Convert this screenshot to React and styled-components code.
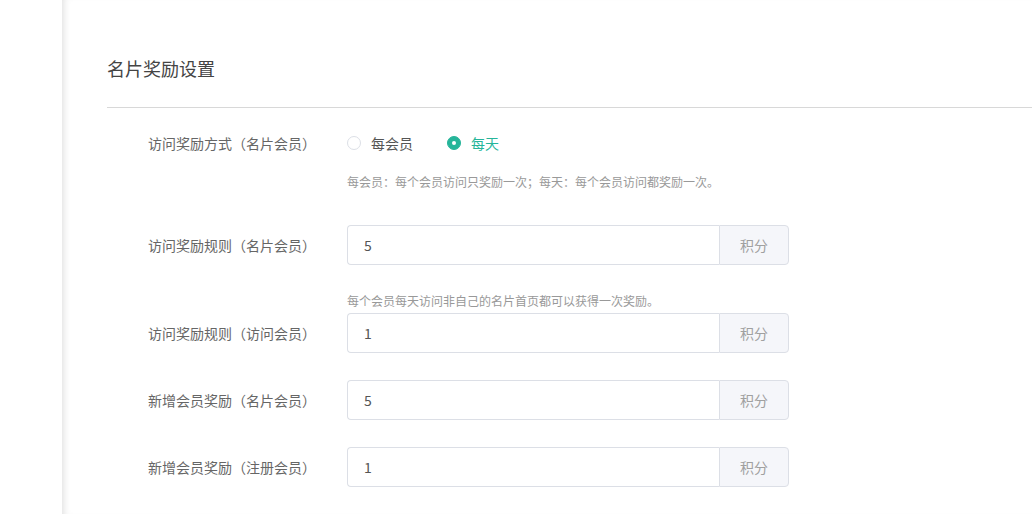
import React from 'react';
import styled, { createGlobalStyle } from 'styled-components';

const GlobalStyle = createGlobalStyle`
    html, body {
        margin: 0;
        padding: 0;
        background: #fff;
        font-family: "Noto Sans CJK SC", "Noto Sans", "Liberation Sans", sans-serif;
    }
`

const Page = styled.div`
    display: flex;
    width: 1032px;
    height: 514px;
    overflow: hidden;
`

const Sidebar = styled.div`
    width: 62px;
    flex-shrink: 0;
    background: #fff;
`

const Main = styled.div`
    flex: 1;
    padding-left: 45px;
    box-shadow: inset 7px 0 7px -5px rgba(0, 0, 0, 0.12);
`

const Header = styled.div`
    padding: 56px 0 27px;
    font-size: 18px;
    line-height: 24px;
    color: #444;
    border-bottom: 1px solid #d8d8d8;
`

const Form = styled.div`
    padding-top: 15px;
`

const Item = styled.div`
    margin-bottom: 27px;
`

const Row = styled.div`
    display: flex;
    align-items: center;
    height: 40px;
`

const Label = styled.div`
    width: 240px;
    padding-right: 31px;
    box-sizing: border-box;
    text-align: right;
    font-size: 14px;
    color: #666;
    flex-shrink: 0;
`

const Hint = styled.div`
    margin-left: 240px;
    font-size: 12px;
    line-height: 18px;
    color: #999;
    padding-top: ${p => (p.$above ? '0' : '10px')};
    padding-bottom: ${p => (p.$above ? '3px' : '7px')};
`

const RadioGroup = styled.div`
    display: flex;
    align-items: center;
    gap: 34px;
`

const RadioOption = styled.label`
    display: flex;
    align-items: center;
    gap: 10px;
    font-size: 14px;
    color: ${p => (p.$checked ? '#26b59a' : '#555')};
`

const Circle = styled.span`
    width: 14px;
    height: 14px;
    box-sizing: border-box;
    border-radius: 50%;
    border: 1px solid ${p => (p.$checked ? '#26b59a' : '#dcdfe6')};
    background: ${p => (p.$checked ? '#26b59a' : '#fff')};
    display: flex;
    align-items: center;
    justify-content: center;

    &::after {
        content: '';
        width: 4px;
        height: 4px;
        border-radius: 50%;
        background: #fff;
        display: ${p => (p.$checked ? 'block' : 'none')};
    }
`

const InputGroup = styled.div`
    display: flex;
    width: 442px;
    height: 40px;
`

const TextInput = styled.input`
    flex: 1;
    min-width: 0;
    height: 40px;
    box-sizing: border-box;
    border: 1px solid #dcdfe6;
    border-right: none;
    border-radius: 4px 0 0 4px;
    padding: 0 16px;
    font-size: 14px;
    color: #555;
    font-family: inherit;
    outline: none;
`

const Addon = styled.div`
    width: 70px;
    box-sizing: border-box;
    border: 1px solid #dcdfe6;
    border-radius: 0 4px 4px 0;
    background: #f5f6fa;
    color: #a0a0a0;
    font-size: 14px;
    display: flex;
    align-items: center;
    justify-content: center;
`

const PointsField = ({ value }) => (
    <InputGroup>
        <TextInput type='text' defaultValue={value} />
        <Addon>积分</Addon>
    </InputGroup>
)

const App = () => {
    return (
        <Page>
            <GlobalStyle />
            <Sidebar />
            <Main>
                <Header>名片奖励设置</Header>
                <Form>
                    <Item>
                        <Row>
                            <Label>访问奖励方式（名片会员）</Label>
                            <RadioGroup>
                                <RadioOption>
                                    <Circle />
                                    每会员
                                </RadioOption>
                                <RadioOption $checked>
                                    <Circle $checked />
                                    每天
                                </RadioOption>
                            </RadioGroup>
                        </Row>
                        <Hint>每会员：每个会员访问只奖励一次；每天：每个会员访问都奖励一次。</Hint>
                    </Item>
                    <Item>
                        <Row>
                            <Label>访问奖励规则（名片会员）</Label>
                            <PointsField value='5' />
                        </Row>
                    </Item>
                    <Item>
                        <Hint $above>每个会员每天访问非自己的名片首页都可以获得一次奖励。</Hint>
                        <Row>
                            <Label>访问奖励规则（访问会员）</Label>
                            <PointsField value='1' />
                        </Row>
                    </Item>
                    <Item>
                        <Row>
                            <Label>新增会员奖励（名片会员）</Label>
                            <PointsField value='5' />
                        </Row>
                    </Item>
                    <Item>
                        <Row>
                            <Label>新增会员奖励（注册会员）</Label>
                            <PointsField value='1' />
                        </Row>
                    </Item>
                </Form>
            </Main>
        </Page>
    )
}

export default App;
